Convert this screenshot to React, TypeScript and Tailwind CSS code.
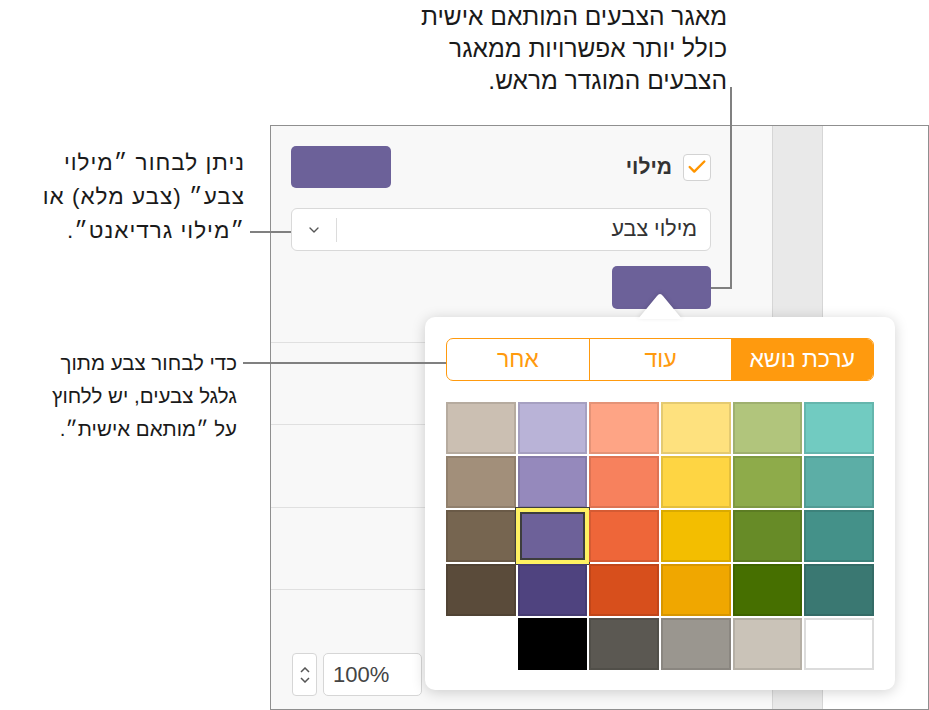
import { Check, ChevronDown } from 'lucide-react'

const font = "font-['Liberation_Sans','DejaVu_Sans',sans-serif]"

const rows: string[][] = [
  ['#cbbfb2', '#b9b3d7', '#fea485', '#fee17e', '#b1c57c', '#71cbc1'],
  ['#a28f7a', '#9589bc', '#f7815d', '#fed543', '#8eab4a', '#5caea6'],
  ['#766550', '#6d6199', '#ee6639', '#f3be00', '#678b27', '#449189'],
  ['#5a4b3a', '#4f437f', '#d74f1c', '#f0a700', '#466f00', '#3a7872'],
  ['', '#000000', '#5b5852', '#9a968f', '#cac3b8', '#ffffff'],
]

const Swatch = ({ color, selected }: { color: string, selected?: boolean }) => {
  if (!color) return <div className="h-[52px]" />
  const isWhite = color === '#ffffff'
  return (
    <div
      className={`relative h-[52px] ${isWhite ? 'shadow-[inset_0_0_0_2px_#dcdcdc]' : 'shadow-[inset_0_0_0_2px_rgba(0,0,0,0.1)]'}`}
      style={{ backgroundColor: color }}
    >
      {selected && (
        <div className="absolute -inset-[3px] border border-[#3d3d3d]">
          <div className="w-full h-full border-[4px] border-[#fff162]">
            <div className="w-full h-full border-2 border-[#3d3d3d]" />
          </div>
        </div>
      )}
    </div>
  )
}

const ColorPopover = () => (
  <div className="absolute left-[154px] top-[191px] w-[470px] h-[373px] bg-white rounded-[10px] shadow-[0_2px_14px_rgba(0,0,0,0.18)] px-[21px] pt-[21px]">
    {/* arrow */}
    <svg className="absolute left-[213px] -top-[25px] drop-shadow-[0_-1px_2px_rgba(0,0,0,0.12)]" width="44" height="28" viewBox="0 0 44 28">
      <path d="M0 27 L19 4 Q22 0 25 4 L44 27 Z" fill="#ffffff" />
    </svg>

    {/* tabs */}
    <div dir="rtl" className="flex h-[43px] border-[1.5px] border-[#ff9a0e] rounded-[7px] overflow-hidden text-[23px]">
      <div className="flex-1 flex items-center justify-center bg-[#ff9a0e] text-white">ערכת נושא</div>
      <div className="flex-1 flex items-center justify-center text-[#ff9a0e] border-l-[1.5px] border-[#ff9a0e]">עוד</div>
      <div className="flex-1 flex items-center justify-center text-[#ff9a0e]">אחר</div>
    </div>

    {/* grid */}
    <div className="grid grid-cols-6 gap-[2px] mt-[21px]">
      {rows.map((row, r) =>
        row.map((c, i) => <Swatch key={`${r}-${i}`} color={c} selected={r === 2 && i === 1} />)
      )}
    </div>
  </div>
)

const Sidebar = () => (
  <div className="w-[501px] h-full bg-[#f8f8f8] flex flex-col">
    <div className="pl-[20px] pr-[61px] pt-[20px] pb-[33px] border-b border-[#e0e0e0]">
      {/* Fill row */}
      <div dir="rtl" className="flex items-center justify-between h-[42px]">
        <div className="flex items-center gap-[11px]">
          <div className="w-[28px] h-[27px] rounded-[4px] border border-[#d3d3d3] bg-white flex items-center justify-center">
            <Check size={22} strokeWidth={2.6} className="text-[#ff9500]" />
          </div>
          <span className="text-[21px] font-bold text-[#333]">מילוי</span>
        </div>
        <div className="w-[100px] h-[42px] rounded-[5px] bg-[#6c6199]" />
      </div>

      {/* fill type dropdown */}
      <div dir="rtl" className="mt-[20px] h-[43px] flex items-center bg-white border border-[#d9d9d9] rounded-[6px]">
        <span className="flex-1 pr-[13px] text-[21.5px] text-[#333]">מילוי צבע</span>
        <div className="w-px h-[24px] bg-[#dcdcdc]" />
        <div className="w-[44px] flex items-center justify-center">
          <ChevronDown size={16} strokeWidth={2} className="text-[#555]" />
        </div>
      </div>

      <div dir="rtl" className="mt-[15px]">
        <div className="w-[99px] h-[43px] rounded-[5px] bg-[#6c6199]" />
      </div>
    </div>
    <div className="h-[82px] border-b border-[#e0e0e0]" />
    <div className="h-[83px] border-b border-[#e0e0e0]" />
    <div className="h-[82px] border-b border-[#e0e0e0]" />
    <div className="flex-1 flex items-end pl-[21px] pb-[13px] gap-[6px]">
      <div className="w-[25px] h-[43px] rounded-[4px] border border-[#d6d6d6] bg-white flex flex-col items-center justify-center gap-[4px]">
        <svg width="10" height="6" viewBox="0 0 10 6"><path d="M1 5 L5 1 L9 5" fill="none" stroke="#555" strokeWidth="1.5" /></svg>
        <svg width="10" height="6" viewBox="0 0 10 6"><path d="M1 1 L5 5 L9 1" fill="none" stroke="#555" strokeWidth="1.5" /></svg>
      </div>
      <div className="w-[99px] h-[43px] rounded-[5px] border border-[#d6d6d6] bg-white flex items-center pl-[9px] text-[22px] text-[#444]">
        100%
      </div>
    </div>
  </div>
)

export default function App() {
  return (
    <div className={`relative w-[929px] h-[710px] bg-white overflow-hidden text-[#1a1a1a] ${font}`}>
      {/* top callout */}
      <div className="h-[125px] flex justify-end pr-[202px] pt-[1px]">
        <p dir="rtl" className="text-[24.5px] leading-[32px] text-right">
          מאגר הצבעים המותאם אישית
          <br />
          כולל יותר אפשרויות ממאגר
          <br />
          הצבעים המוגדר מראש.
        </p>
      </div>

      <div className="flex">
        {/* left callouts */}
        <div className="w-[270px] flex flex-col items-end">
          <p dir="rtl" className="mt-[21px] pr-[25px] text-[22.5px] tracking-[1px] leading-[34px] text-right">
            ניתן לבחור ״מילוי
            <br />
            צבע״ (צבע מלא) או
            <br />
            ״מילוי גרדיאנט״.
          </p>
          <p dir="rtl" className="mt-[98px] pr-[33px] text-[20.5px] leading-[33px] text-right">
            כדי לבחור צבע מתוך
            <br />
            גלגל צבעים, יש ללחוץ
            <br />
            על ״מותאם אישית״.
          </p>
        </div>

        {/* app frame */}
        <div className="relative w-[659px] h-[585px] border border-[#8f8f8f] flex">
          <Sidebar />
          <div className="w-[51px] h-full bg-[#e9e9e9] border-l border-r border-[#d6d6d6]" />
          <div className="flex-1 bg-white" />
          <ColorPopover />
        </div>
      </div>

      {/* leader lines */}
      <svg className="absolute inset-0 pointer-events-none" width="929" height="710">
        <path d="M731 87 V288 H711" fill="none" stroke="#808080" strokeWidth="2" />
        <path d="M250 232 H291" fill="none" stroke="#808080" strokeWidth="2" />
        <path d="M243 363 H446" fill="none" stroke="#808080" strokeWidth="2" />
      </svg>
    </div>
  )
}
